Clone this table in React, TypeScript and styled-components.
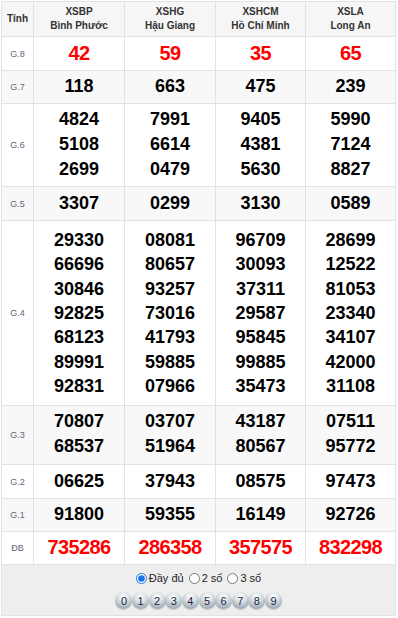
import React, { useState } from "react";
import styled, { createGlobalStyle } from "styled-components";

const Global = createGlobalStyle`
  html, body { margin: 0; padding: 0; background: #fff; }
  body { font-family: Arial, "Liberation Sans", sans-serif; }
`;

const Wrap = styled.div`
  width: 395px;
  margin: 1px 0 0 1px;
`;

const Table = styled.table`
  width: 395px;
  border-collapse: collapse;
  table-layout: fixed;
  font-family: Arial, "Liberation Sans", sans-serif;
`;

const HeadCell = styled.th`
  background: #f6f6f6;
  border: 1px solid #e2e2e2;
  height: 34px;
  padding: 0;
  font-size: 10px;
  font-weight: bold;
  color: #333;
  line-height: 14px;
  text-align: center;
  vertical-align: middle;
`;

const Row = styled.tr<{ $alt?: boolean }>`
  background: ${(p) => (p.$alt ? "#f8f8f8" : "#fff")};
`;

const Label = styled.td`
  border: 1px solid #e2e2e2;
  font-size: 9px;
  color: #667;
  text-align: center;
  vertical-align: middle;
  padding: 0;
`;

const Cell = styled.td<{ $red?: boolean; $lh: number; $pad: string }>`
  border: 1px solid #e2e2e2;
  text-align: center;
  vertical-align: middle;
  padding: ${(p) => p.$pad};
  font-weight: bold;
  font-size: ${(p) => (p.$red ? "20px" : "18px")};
  letter-spacing: ${(p) => (p.$red ? "-0.6px" : "0")};
  line-height: ${(p) => p.$lh}px;
  color: ${(p) => (p.$red ? "#f00" : "#000")};
`;

const Num = styled.div``;

const Panel = styled.div`
  background: #eeeeee;
  border: 1px solid #e2e2e2;
  border-top: none;
  height: 51px;
  display: flex;
  flex-direction: column;
  align-items: center;
  padding-top: 5px;
  box-sizing: border-box;
`;

const Radios = styled.div`
  display: flex;
  align-items: center;
  gap: 5px;
  font-size: 11px;
  color: #222;
  height: 16px;
`;

const RadioLabel = styled.label`
  display: flex;
  align-items: center;
  gap: 2px;
  cursor: pointer;
`;

const Radio = styled.input`
  margin: 0;
  width: 11px;
  height: 11px;
  accent-color: #1a73e8;
`;

const Balls = styled.div`
  display: flex;
  margin-top: 6px;
`;

const Ball = styled.span`
  width: 17px;
  height: 17px;
  margin-right: -0.4px;
  border-radius: 50%;
  display: flex;
  align-items: center;
  justify-content: center;
  font-size: 11px;
  color: #1b2640;
  background: radial-gradient(circle at 50% 28%, #ffffff 0%, #dfe5ea 32%, #a7b2bc 72%, #7c8995 100%);
  box-shadow: 0 1px 1px rgba(0, 0, 0, 0.18);
`;

const cols = [
  { code: "XSBP", name: "Bình Phước" },
  { code: "XSHG", name: "Hậu Giang" },
  { code: "XSHCM", name: "Hồ Chí Minh" },
  { code: "XSLA", name: "Long An" },
];

type Prize = { label: string; red?: boolean; lh?: number; pad?: string; values: string[][] };

const prizes: Prize[] = [
  { label: "G.8", red: true, lh: 26, values: [["42"], ["59"], ["35"], ["65"]] },
  { label: "G.7", values: [["118"], ["663"], ["475"], ["239"]] },
  {
    label: "G.6",
    values: [
      ["4824", "5108", "2699"],
      ["7991", "6614", "0479"],
      ["9405", "4381", "5630"],
      ["5990", "7124", "8827"],
    ],
  },
  { label: "G.5", pad: "4px 0", values: [["3307"], ["0299"], ["3130"], ["0589"]] },
  {
    label: "G.4",
    lh: 24.33,
    pad: "7px 0",
    values: [
      ["29330", "66696", "30846", "92825", "68123", "89991", "92831"],
      ["08081", "80657", "93257", "73016", "41793", "59885", "07966"],
      ["96709", "30093", "37311", "29587", "95845", "99885", "35473"],
      ["28699", "12522", "81053", "23340", "34107", "42000", "31108"],
    ],
  },
  {
    label: "G.3",
    pad: "3px 0 5px",
    values: [
      ["70807", "68537"],
      ["03707", "51964"],
      ["43187", "80567"],
      ["07511", "95772"],
    ],
  },
  { label: "G.2", pad: "4px 0", values: [["06625"], ["37943"], ["08575"], ["97473"]] },
  { label: "G.1", values: [["91800"], ["59355"], ["16149"], ["92726"]] },
  { label: "ĐB", red: true, values: [["735286"], ["286358"], ["357575"], ["832298"]] },
];

export default function App() {
  const [mode, setMode] = useState("full");
  return (
    <Wrap>
      <Global />
      <Table>
        <colgroup>
          <col style={{ width: 32 }} />
          <col style={{ width: 91 }} />
          <col style={{ width: 91 }} />
          <col style={{ width: 90 }} />
          <col style={{ width: 90 }} />
        </colgroup>
        <thead>
          <tr>
            <HeadCell>Tỉnh</HeadCell>
            {cols.map((c) => (
              <HeadCell key={c.code}>
                {c.code}
                <br />
                {c.name}
              </HeadCell>
            ))}
          </tr>
        </thead>
        <tbody>
          {prizes.map((p, i) => (
            <Row key={p.label} $alt={i % 2 === 1}>
              <Label>{p.label}</Label>
              {p.values.map((vs, j) => (
                <Cell key={j} $red={p.red} $lh={p.lh ?? 25} $pad={p.pad ?? "3px 0 4px"}>
                  {vs.map((v, k) => (
                    <Num key={k}>{v}</Num>
                  ))}
                </Cell>
              ))}
            </Row>
          ))}
        </tbody>
      </Table>
      <Panel>
        <Radios>
          <RadioLabel>
            <Radio type="radio" name="m" checked={mode === "full"} onChange={() => setMode("full")} />
            Đầy đủ
          </RadioLabel>
          <RadioLabel>
            <Radio type="radio" name="m" checked={mode === "2"} onChange={() => setMode("2")} />
            2 số
          </RadioLabel>
          <RadioLabel>
            <Radio type="radio" name="m" checked={mode === "3"} onChange={() => setMode("3")} />
            3 số
          </RadioLabel>
        </Radios>
        <Balls>
          {Array.from({ length: 10 }, (_, d) => (
            <Ball key={d}>{d}</Ball>
          ))}
        </Balls>
      </Panel>
    </Wrap>
  );
}
